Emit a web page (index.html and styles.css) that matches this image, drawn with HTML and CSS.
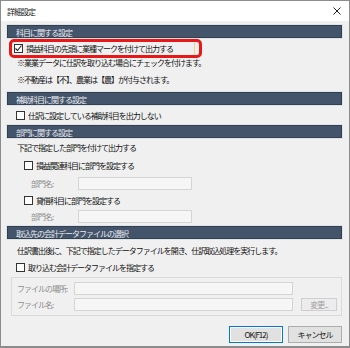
FILE: index.html
```html
<!DOCTYPE html>
<html>
<head>
<meta charset="UTF-8">
<title>詳細設定</title>
<link rel="stylesheet" href="styles.css">
</head>
<body>
  <div class="window">
    <div class="titlebar">
      <span class="title">詳細設定</span>
      <svg class="close" width="8" height="8" viewBox="0 0 8 8">
        <path d="M0.5 0.5 L7.5 7.5 M7.5 0.5 L0.5 7.5" stroke="#222" stroke-width="1" fill="none"/>
      </svg>
    </div>
    <div class="content">
      <div class="head h1">科目に関する設定</div>
      <div class="mark-row">
        <span class="mark">
          <span class="focus">
            <span class="cb"><svg width="9" height="9" viewBox="0 0 9 9"><path d="M1.5 4.5 L3.5 6.5 L7.5 1.5" stroke="#222" stroke-width="1.1" fill="none"/></svg></span>
            <span class="lbl">損益科目の先頭に業種マークを付けて出力する</span>
          </span>
        </span>
      </div>
      <div class="note n1">※業業データに仕訳を取り込む場合にチェックを付けます。</div>
      <div class="note n2">※不動産は【不】、農業は【農】が付与されます。</div>

      <div class="head h2">補助科目に関する設定</div>
      <div class="check c1"><span class="cb"></span><span class="lbl">仕訳に設定している補助科目を出力しない</span></div>

      <div class="head">部門に関する設定</div>
      <div class="note n3">下記で指定した部門を付けて出力する</div>
      <div class="check sub c2"><span class="cb"></span><span class="lbl">損益関連科目に部門を設定する</span></div>
      <div class="field-row f1"><span class="flabel">部門名:</span><input class="box dept" type="text" disabled></div>
      <div class="check sub c3"><span class="cb"></span><span class="lbl">貸借科目に部門を設定する</span></div>
      <div class="field-row f2"><span class="flabel">部門名:</span><input class="box dept" type="text" disabled></div>

      <div class="head">取込先の会計データファイルの選択</div>
      <div class="note n4">仕訳書出後に、下記で指定したデータファイルを開き、仕訳取込処理を実行します。</div>
      <div class="check c4"><span class="cb"></span><span class="lbl">取り込む会計データファイルを指定する</span></div>
      <div class="group">
        <div class="file-row"><span class="glabel">ファイルの場所:</span><input class="box path" type="text" disabled></div>
        <div class="file-row"><span class="glabel">ファイル名:</span><input class="box path" type="text" disabled><span class="btn small">変更...</span></div>
      </div>

      <div class="buttons">
        <span class="btn main">OK(F12)</span>
        <span class="btn">キャンセル</span>
      </div>
    </div>
  </div>
</body>
</html>
```
FILE: styles.css
```css
body {
  margin: 0;
  font-family: "Noto Sans CJK JP", "Noto Sans", sans-serif;
  font-size: 8px;
  letter-spacing: -1px;
  color: #111;
}
.window {
  box-sizing: border-box;
  width: 350px;
  height: 348px;
  border: 1px solid #8c8c8c;
  border-bottom-width: 2px;
  background: #f0f0f0;
}
.titlebar {
  height: 20px;
  background: #ffffff;
  display: flex;
  align-items: center;
  justify-content: space-between;
  padding: 0 8px 0 6px;
}
.title {
  color: #222;
}
.content {
  padding: 0 7px 0 6px;
}
.head {
  height: 13px;
  line-height: 13px;
  box-sizing: border-box;
  background: #44546a;
  border: 1px solid #33404f;
  box-shadow: 0 0 0 1px #dfe3e8;
  color: #e8ecf1;
  padding-left: 8px;
}
.h1 { margin-top: 4px; }
.mark-row {
  margin-top: 1px;
  height: 19px;
}
.mark {
  display: inline-flex;
  box-sizing: border-box;
  height: 19px;
  width: 193px;
  margin-left: 2px;
  border: 3px solid #e81818;
  border-radius: 5px;
  padding-left: 2px;
  align-items: center;
}
.focus {
  display: inline-flex;
  align-items: center;
  height: 11px;
  width: 180px;
  border-right: 1px solid #f4cf7f;
}
.cb {
  box-sizing: border-box;
  width: 9px;
  height: 9px;
  border: 1px solid #333;
  background: #fff;
  display: inline-flex;
  margin-right: 3px;
}
.cb svg {
  margin: -1px;
}
.note {
  padding-left: 10px;
}
.n1 { height: 10px; line-height: 10px; }
.n2 { height: 16px; line-height: 16px; margin-top: 4px; }
.h2 { margin-top: 4px; }
.check {
  display: flex;
  align-items: center;
  padding-left: 9px;
}
.check.sub { padding-left: 17px; }
.c1 { height: 20px; }
.n3 { height: 20px; line-height: 20px; }
.c2 { height: 14px; }
.c3 { height: 12px; }
.c4 { height: 10px; }
.field-row {
  display: flex;
  align-items: center;
  padding-left: 24px;
}
.f1 { height: 22px; }
.f2 { height: 20px; }
.flabel {
  width: 47px;
  color: #8c8c8c;
}
.box {
  box-sizing: border-box;
  height: 13px;
  padding: 0;
  margin: 0;
  border: 1px solid #d5d5d5;
  background: #f6f6f6;
}
.dept { width: 114px; }
.n4 { height: 23px; line-height: 23px; }
.group {
  margin: 5px 0 0 4px;
  box-sizing: border-box;
  height: 39px;
  border: 1px solid #dadada;
  padding: 4px 0 0 5px;
  display: flex;
  flex-direction: column;
  gap: 3px;
}
.file-row {
  display: flex;
  align-items: center;
  height: 13px;
}
.glabel {
  width: 57px;
  color: #8c8c8c;
}
.path { width: 219px; }
.btn {
  box-sizing: border-box;
  display: inline-flex;
  align-items: center;
  justify-content: center;
  width: 54px;
  height: 17px;
  border: 1px solid #adadad;
  background: #e1e1e1;
  color: #111;
}
.btn.small {
  width: 36px;
  height: 13px;
  margin-left: 8px;
  border-color: #cfcfcf;
  background: #ececec;
  color: #a0a0a0;
}
.btn.main {
  border: 1px solid #0078d7;
  box-shadow: inset 0 0 0 1px #ffffff;
}
.buttons {
  margin-top: 10px;
  display: flex;
  justify-content: flex-end;
  gap: 5px;
}
```
